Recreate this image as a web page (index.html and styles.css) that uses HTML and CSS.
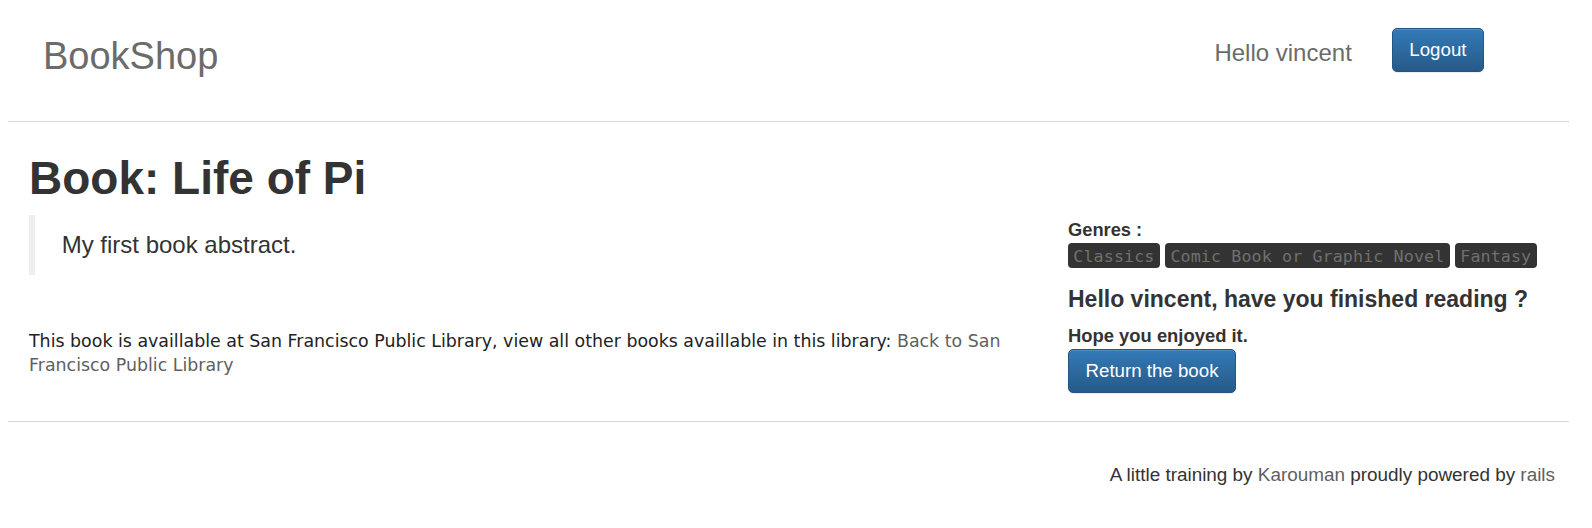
FILE: index.html
```html
<!DOCTYPE html>
<html lang="en">
<head>
<meta charset="utf-8">
<title>BookShop</title>
<link rel="stylesheet" href="styles.css">
</head>
<body>
<header class="navbar">
  <a class="brand" href="#">BookShop</a>
  <div class="nav-right">
    <span class="hello">Hello vincent</span>
    <a class="btn" href="#">Logout</a>
  </div>
</header>
<main class="content">
  <h1 class="title">Book: Life of Pi</h1>
  <div class="row">
    <div class="col-main">
      <blockquote class="abstract"><p>My first book abstract.</p></blockquote>
      <p class="availability">This book is availlable at San Francisco Public Library, view all other books availlable in this library: <a class="link" href="#">Back to San Francisco Public Library</a></p>
    </div>
    <aside class="col-side">
      <div class="genres-title">Genres :</div>
      <div class="genres">
        <span class="genre">Classics</span>
        <span class="genre">Comic Book or Graphic Novel</span>
        <span class="genre">Fantasy</span>
      </div>
      <h4 class="question">Hello vincent, have you finished reading ?</h4>
      <div class="hope">Hope you enjoyed it.</div>
      <a class="btn" href="#">Return the book</a>
    </aside>
  </div>
</main>
<footer class="footer">A little training by <a class="link" href="#">Karouman</a> proudly powered by <a class="link" href="#">rails</a></footer>
</body>
</html>
```
FILE: styles.css
```css
html, body {
  background: #ffffff;
}
body {
  margin: 0 23px 0 8px;
  font-family: "Liberation Sans", Arial, Helvetica, sans-serif;
  color: #333333;
}
a {
  text-decoration: none;
}
.link {
  color: #5f5f5f;
}

/* navbar */
.navbar {
  height: 121px;
  border-bottom: 1px solid #d6d6d6;
  display: flex;
  justify-content: space-between;
  align-items: flex-start;
}
.brand {
  margin-top: 38px;
  margin-left: 35px;
  font-size: 38px;
  line-height: 36px;
  color: #6b6b6b;
}
.nav-right {
  display: flex;
  align-items: flex-start;
  gap: 40px;
  margin-top: 28px;
  margin-right: 85px;
}
.hello {
  margin-top: 12.7px;
  font-size: 24px;
  line-height: 24px;
  color: #6b6b6b;
}
.btn {
  display: inline-block;
  padding: 8px 16.5px;
  font-size: 18.7px;
  line-height: 26px;
  color: #ffffff;
  background-color: #2d6ca2;
  background-image: linear-gradient(to bottom, #337ab7 0%, #265a88 100%);
  border: 1px solid #245580;
  border-radius: 5px;
  box-shadow: inset 0 1px 0 rgba(255, 255, 255, 0.15), 0 1px 1px rgba(0, 0, 0, 0.075);
  white-space: nowrap;
}

/* content */
.content {
  padding: 0 14px 28.3px 21px;
  border-bottom: 1px solid #d6d6d6;
}
.title {
  margin: 30.8px 0 11.6px;
  font-size: 46px;
  line-height: 50.6px;
  font-weight: bold;
  color: #333333;
}
.row {
  display: flex;
  gap: 20px;
  align-items: flex-start;
}
.col-main {
  flex: 1;
  min-width: 0;
}
.col-side {
  width: 487px;
  flex: none;
}
.abstract {
  margin: 0;
  padding: 13.33px 26.67px;
  border-left: 6.67px solid #eeeeee;
  font-size: 24px;
  line-height: 33.6px;
  color: #333333;
}
.abstract p {
  margin: 0;
}
.availability {
  margin: 53.3px 0 0;
  font-family: "DejaVu Sans", Verdana, sans-serif;
  font-size: 17.4px;
  line-height: 24px;
  color: #222222;
}

.genres-title {
  margin-top: 1.6px;
  font-size: 18.3px;
  line-height: 26.1px;
  font-weight: bold;
}
.genres {
  margin-top: 0.6px;
  display: flex;
  flex-wrap: wrap;
  gap: 5.3px;
}
.genre {
  padding: 2.5px 5.3px;
  font-family: "DejaVu Sans Mono", "Liberation Mono", monospace;
  font-size: 16.7px;
  letter-spacing: 0.1px;
  line-height: 20px;
  color: #707070;
  background: #333333;
  border-radius: 4px;
}
.question {
  margin: 19px 0 10.3px;
  font-size: 23px;
  line-height: 25.3px;
  font-weight: bold;
}
.hope {
  font-size: 18.4px;
  line-height: 26.3px;
  font-weight: bold;
}

/* footer */
.footer {
  padding: 39.3px 14px 0 0;
  text-align: right;
  font-size: 18.9px;
  line-height: 26.7px;
  color: #333333;
}
```
